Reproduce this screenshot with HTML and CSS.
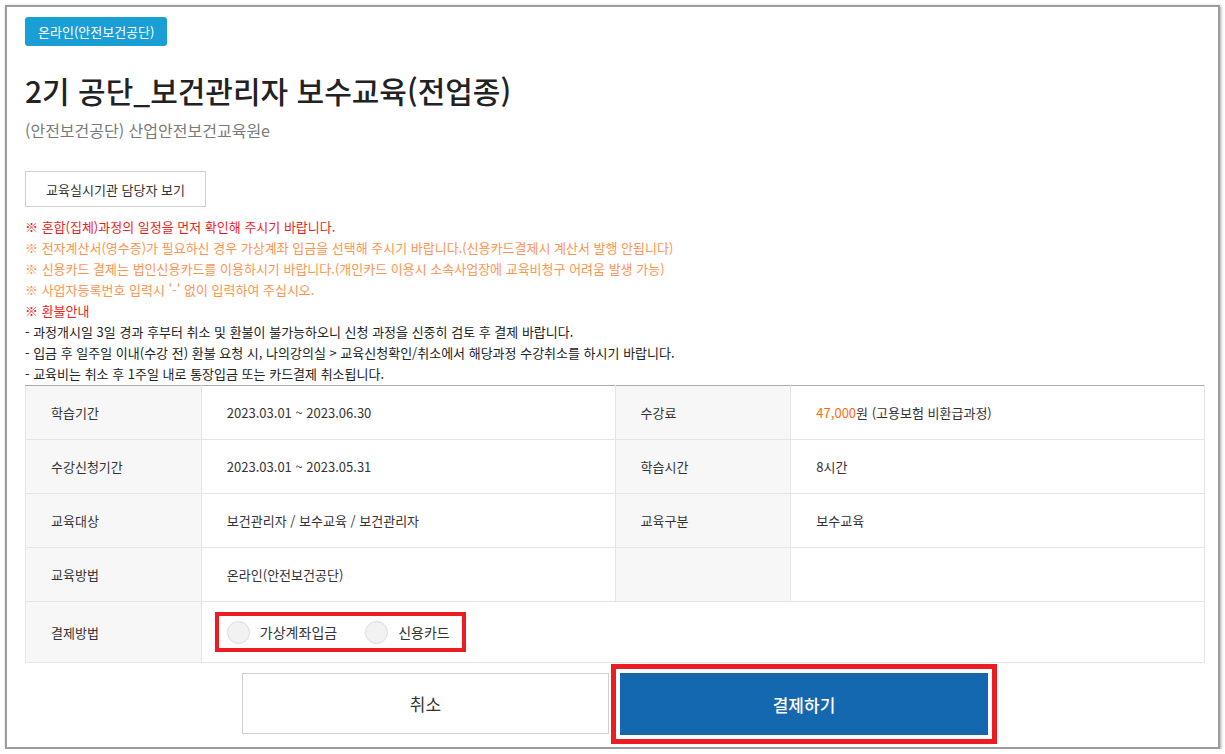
FILE: index.html
```html
<!DOCTYPE html>
<html lang="ko">
  <head>
    <meta charset="UTF-8" />
    <meta name="viewport" content="width=device-width, initial-scale=1.0" />
    <title>수강신청 - 2기 공단_보건관리자 보수교육(전업종)</title>
    <link rel="stylesheet" href="styles.css">
  </head>
  <body>
    <div class="window">
      <div class="page">
        <span class="badge">온라인(안전보건공단)</span>
        <h1 class="course-title">2기 공단_보건관리자 보수교육(전업종)</h1>
        <p class="provider">(안전보건공단) 산업안전보건교육원e</p>

        <button type="button" class="contact-btn">교육실시기관 담당자 보기</button>

        <ul class="notice">
          <li class="red">※ 혼합(집체)과정의 일정을 먼저 확인해 주시기 바랍니다.</li>
          <li class="orange">※ 전자계산서(영수증)가 필요하신 경우 가상계좌 입금을 선택해 주시기 바랍니다.(신용카드결제시 계산서 발행 안됩니다)</li>
          <li class="orange">※ 신용카드 결제는 법인신용카드를 이용하시기 바랍니다.(개인카드 이용시 소속사업장에 교육비청구 어려움 발생 가능)</li>
          <li class="orange">※ 사업자등록번호 입력시 '-' 없이 입력하여 주십시오.</li>
          <li class="red">※ 환불안내</li>
          <li>- 과정개시일 3일 경과 후부터 취소 및 환불이 불가능하오니 신청 과정을 신중히 검토 후 결제 바랍니다.</li>
          <li>- 입금 후 일주일 이내(수강 전) 환불 요청 시, 나의강의실 &gt; 교육신청확인/취소에서 해당과정 수강취소를 하시기 바랍니다.</li>
          <li>- 교육비는 취소 후 1주일 내로 통장입금 또는 카드결제 취소됩니다.</li>
        </ul>

        <table class="info">
          <colgroup>
            <col class="col-label" />
            <col class="col-value" />
            <col class="col-label" />
            <col class="col-value" />
          </colgroup>
          <tr>
            <th>학습기간</th>
            <td>2023.03.01 ~ 2023.06.30</td>
            <th>수강료</th>
            <td><span class="price">47,000</span>원 (고용보험 비환급과정)</td>
          </tr>
          <tr>
            <th>수강신청기간</th>
            <td>2023.03.01 ~ 2023.05.31</td>
            <th>학습시간</th>
            <td>8시간</td>
          </tr>
          <tr>
            <th>교육대상</th>
            <td>보건관리자 / 보수교육 / 보건관리자</td>
            <th>교육구분</th>
            <td>보수교육</td>
          </tr>
          <tr>
            <th>교육방법</th>
            <td>온라인(안전보건공단)</td>
            <th></th>
            <td></td>
          </tr>
          <tr class="pay-row">
            <th>결제방법</th>
            <td colspan="3">
              <div class="pay-methods">
                <label class="radio"><input type="radio" name="pay" value="vbank" /><span>가상계좌입금</span></label>
                <label class="radio"><input type="radio" name="pay" value="card" /><span>신용카드</span></label>
              </div>
            </td>
          </tr>
        </table>

        <div class="actions">
          <button type="button" class="btn btn-cancel">취소</button>
          <button type="button" class="btn btn-pay">결제하기</button>
        </div>
      </div>
    </div>
  </body>
</html>
```

FILE: styles.css
```css
* {
  box-sizing: border-box;
}

body {
  margin: 0;
  background-color: #fff;
  font-family: "Noto Sans CJK KR", "Noto Sans", sans-serif;
  color: #333;
}

.window {
  width: 1215px;
  height: 744px;
  margin: 5px 0 0 5px;
  background-color: #fff;
  border: 2px solid #9c9c9c;
  box-shadow: 1px 1px 3px rgba(0, 0, 0, 0.35);
}

.page {
  padding: 10px 12px 0 18px;
}

.badge {
  display: inline-block;
  height: 29px;
  line-height: 29px;
  padding: 0 13px;
  background-color: #1a9ed6;
  border-radius: 3px;
  color: #fff;
  font-size: 13px;
}

.course-title {
  margin: 22px 0 0;
  font-size: 30px;
  font-weight: 500;
  line-height: 44px;
  color: #222;
}

.provider {
  margin: 6px 0 0;
  font-size: 16px;
  line-height: 24px;
  color: #7a7a7a;
}

.contact-btn {
  display: block;
  width: 181px;
  height: 36px;
  margin-top: 29px;
  background-color: #fff;
  border: 1px solid #cfcfcf;
  font-family: inherit;
  font-size: 13px;
  color: #333;
  cursor: pointer;
}

.notice {
  list-style: none;
  margin: 9px 0 0;
  padding: 0;
  font-size: 13px;
  line-height: 21px;
  color: #222;
}

.notice .red {
  color: #f01d1d;
}

.notice .orange {
  color: #ff9452;
}

.info {
  width: 1180px;
  margin-top: 1px;
  border-collapse: collapse;
  font-size: 13px;
}

.col-label {
  width: 176px;
}

.col-value {
  width: 414px;
}

.info th,
.info td {
  height: 54px;
  padding: 0 25px;
  border: 1px solid #e5e5e5;
  text-align: left;
  font-weight: normal;
  color: #333;
}

.info tr:first-child th,
.info tr:first-child td {
  border-top: 1px solid #ababab;
}

.info th {
  background-color: #f7f7f7;
}

.price {
  color: #ff6a13;
}

.pay-row th,
.pay-row td {
  height: 61px;
}

.pay-row td {
  padding-left: 13px;
}

.pay-methods {
  display: inline-flex;
  align-items: center;
  gap: 28px;
  height: 40px;
  padding: 0 12px 0 8px;
  border: 4px solid #ec1c24;
}

.radio {
  display: flex;
  align-items: center;
  gap: 10px;
  font-size: 14px;
  color: #333;
  cursor: pointer;
}

.radio input {
  appearance: none;
  -webkit-appearance: none;
  width: 23px;
  height: 23px;
  margin: 0;
  border: 1px solid #dcdcdc;
  border-radius: 50%;
  background-color: #f2f2f2;
}

.actions {
  display: flex;
  justify-content: center;
  gap: 11px;
  width: 1180px;
  margin-top: 10px;
}

.btn {
  width: 367px;
  height: 61px;
  font-family: inherit;
  font-size: 17px;
  cursor: pointer;
}

.btn-cancel {
  background-color: #fff;
  border: 1px solid #cfcfcf;
  color: #333;
}

.btn-pay {
  width: 368px;
  height: 62px;
  background-color: #1468b0;
  border: none;
  color: #fff;
  font-weight: 500;
  outline: 5px solid #ec1c24;
  outline-offset: 4px;
}
```
